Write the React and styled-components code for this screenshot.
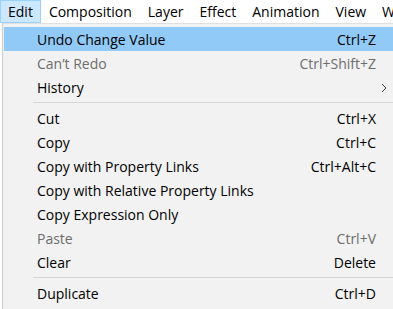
import styled, { createGlobalStyle } from "styled-components";

const GlobalStyle = createGlobalStyle`
  body {
    margin: 0;
    background: #ffffff;
    font-family: "Open Sans", "Noto Sans", sans-serif;
    overflow: hidden;
  }
`;

const menuNames = ["Edit", "Composition", "Layer", "Effect", "Animation", "View", "Window"];

const items = [
  { label: "Undo Change Value", shortcut: "Ctrl+Z", active: true },
  { label: "Can\u2019t Redo", shortcut: "Ctrl+Shift+Z", disabled: true },
  { label: "History", submenu: true },
  { separator: true },
  { label: "Cut", shortcut: "Ctrl+X" },
  { label: "Copy", shortcut: "Ctrl+C" },
  { label: "Copy with Property Links", shortcut: "Ctrl+Alt+C" },
  { label: "Copy with Relative Property Links" },
  { label: "Copy Expression Only" },
  { label: "Paste", shortcut: "Ctrl+V", disabled: true },
  { label: "Clear", shortcut: "Delete" },
  { separator: true },
  { label: "Duplicate", shortcut: "Ctrl+D" },
];

const App = () => {
  return (
    <Window>
      <GlobalStyle />
      <MenuBar>
        {menuNames.map((name, i) => (
          <MenuTitle key={name} $open={i === 0}>
            {name}
          </MenuTitle>
        ))}
      </MenuBar>

      <Dropdown>
        {items.map((item, i) =>
          item.separator ? (
            <Separator key={i} />
          ) : (
            <Item key={i} $active={item.active} $disabled={item.disabled}>
              <Label>{item.label}</Label>
              {item.shortcut && <Shortcut>{item.shortcut}</Shortcut>}
              {item.submenu && (
                <Arrow viewBox="0 0 6 10">
                  <path d="M1 1 L5 5 L1 9" fill="none" stroke="#3c3c3c" strokeWidth="1" />
                </Arrow>
              )}
            </Item>
          )
        )}
      </Dropdown>
    </Window>
  );
};

const Window = styled.div`
  width: 393px;
  height: 309px;
  overflow: hidden;
  background: #ffffff;
`;

const MenuBar = styled.div`
  display: flex;
  height: 23px;
  background: #ffffff;
  white-space: nowrap;
  overflow: hidden;
`;

const MenuTitle = styled.div`
  box-sizing: border-box;
  flex-shrink: 0;
  height: 23px;
  padding: 0 7px;
  display: flex;
  align-items: center;
  font-size: 14px;
  color: #000000;
  background: ${(p) => (p.$open ? "#cce8ff" : "transparent")};
  border: 1px solid ${(p) => (p.$open ? "#99d1ff" : "transparent")};
`;

const Dropdown = styled.div`
  margin-left: 2px;
  height: 286px;
  padding: 3px 0 0 1px;
  background: #f2f2f2;
  border-left: 1px solid #cccccc;
  border-top: 1px solid #e0e0e0;
`;

const Item = styled.div`
  position: relative;
  display: flex;
  align-items: center;
  justify-content: space-between;
  height: 24px;
  padding: 0 17px 0 33px;
  font-size: 14px;
  white-space: nowrap;
  color: ${(p) => (p.$disabled ? "#6d6d6d" : "#000000")};
  background: ${(p) => (p.$active ? "#91c9f7" : "transparent")};
`;

const Label = styled.span``;

const Shortcut = styled.span`
  margin-left: 24px;
`;

const Arrow = styled.svg`
  position: absolute;
  right: 6px;
  top: 8px;
  width: 6px;
  height: 10px;
`;

const Separator = styled.div`
  height: 7px;
  margin-left: 29px;
  display: flex;
  align-items: center;

  &::before {
    content: "";
    flex: 1;
    height: 1px;
    background: #d7d7d7;
  }
`;

export default App;
